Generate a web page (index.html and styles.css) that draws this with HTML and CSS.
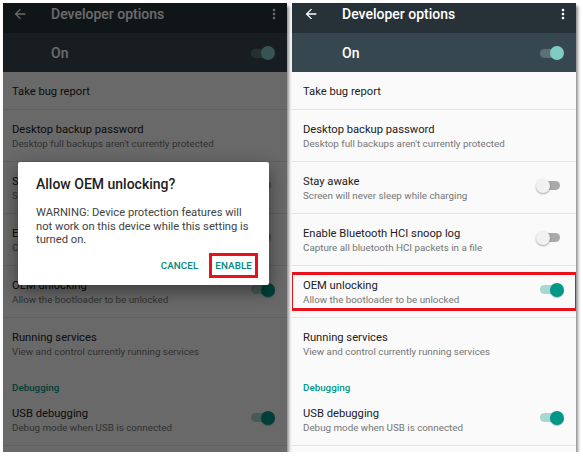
FILE: index.html
```html
<!DOCTYPE html>
<html>
<head>
<meta charset="utf-8">
<link rel="stylesheet" href="styles.css">
</head>
<body>
<div class="stage">
  <div class="phone phone--left">
    <div class="screen">
      <div class="toolbar">
        <svg class="back" viewBox="0 0 24 24"><path d="M20 11H7.83l5.59-5.59L12 4l-8 8 8 8 1.41-1.41L7.83 13H20v-2z"/></svg>
        <span class="toolbar-title">Developer options</span>
        <svg class="more" viewBox="0 0 24 24"><path d="M12 8c1.1 0 2-.9 2-2s-.9-2-2-2-2 .9-2 2 .9 2 2 2zm0 2c-1.1 0-2 .9-2 2s.9 2 2 2 2-.9 2-2-.9-2-2-2zm0 6c-1.1 0-2 .9-2 2s.9 2 2 2 2-.9 2-2-.9-2-2-2z"/></svg>
      </div>
      <div class="switchbar">
        <span class="switchbar-label">On</span>
        <span class="toggle toggle--bar"><span class="thumb"></span></span>
      </div>
      <div class="row row--single"><div class="texts"><div class="title">Take bug report</div></div></div>
      <div class="row"><div class="texts"><div class="title">Desktop backup password</div><div class="sub">Desktop full backups aren't currently protected</div></div></div>
      <div class="row"><div class="texts"><div class="title">Stay awake</div><div class="sub">Screen will never sleep while charging</div></div><span class="toggle toggle--off"><span class="thumb"></span></span></div>
      <div class="row"><div class="texts"><div class="title">Enable Bluetooth HCI snoop log</div><div class="sub">Capture all bluetooth HCI packets in a file</div></div><span class="toggle toggle--off"><span class="thumb"></span></span></div>
      <div class="row"><div class="texts"><div class="title">OEM unlocking</div><div class="sub">Allow the bootloader to be unlocked</div></div><span class="toggle toggle--on"><span class="thumb"></span></span></div>
      <div class="row row--plain"><div class="texts"><div class="title">Running services</div><div class="sub">View and control currently running services</div></div></div>
      <div class="category">Debugging</div>
      <div class="row row--after-cat"><div class="texts"><div class="title">USB debugging</div><div class="sub">Debug mode when USB is connected</div></div><span class="toggle toggle--on"><span class="thumb"></span></span></div>
    </div>
    <div class="scrim"></div>
    <div class="dialog">
      <div class="dialog-title">Allow OEM unlocking?</div>
      <div class="dialog-msg">WARNING: Device protection features will not work on this device while this setting is turned on.</div>
      <div class="dialog-actions">
        <span class="btn">CANCEL</span>
        <span class="btn btn--marked">ENABLE</span>
      </div>
    </div>
  </div>

  <div class="phone phone--right">
    <div class="screen">
      <div class="toolbar">
        <svg class="back" viewBox="0 0 24 24"><path d="M20 11H7.83l5.59-5.59L12 4l-8 8 8 8 1.41-1.41L7.83 13H20v-2z"/></svg>
        <span class="toolbar-title">Developer options</span>
        <svg class="more" viewBox="0 0 24 24"><path d="M12 8c1.1 0 2-.9 2-2s-.9-2-2-2-2 .9-2 2 .9 2 2 2zm0 2c-1.1 0-2 .9-2 2s.9 2 2 2 2-.9 2-2-.9-2-2-2zm0 6c-1.1 0-2 .9-2 2s.9 2 2 2 2-.9 2-2-.9-2-2-2z"/></svg>
      </div>
      <div class="switchbar">
        <span class="switchbar-label">On</span>
        <span class="toggle toggle--bar"><span class="thumb"></span></span>
      </div>
      <div class="row row--single"><div class="texts"><div class="title">Take bug report</div></div></div>
      <div class="row"><div class="texts"><div class="title">Desktop backup password</div><div class="sub">Desktop full backups aren't currently protected</div></div></div>
      <div class="row"><div class="texts"><div class="title">Stay awake</div><div class="sub">Screen will never sleep while charging</div></div><span class="toggle toggle--off"><span class="thumb"></span></span></div>
      <div class="row"><div class="texts"><div class="title">Enable Bluetooth HCI snoop log</div><div class="sub">Capture all bluetooth HCI packets in a file</div></div><span class="toggle toggle--off"><span class="thumb"></span></span></div>
      <div class="row row--marked"><div class="texts"><div class="title">OEM unlocking</div><div class="sub">Allow the bootloader to be unlocked</div></div><span class="toggle toggle--on"><span class="thumb"></span></span></div>
      <div class="row row--plain"><div class="texts"><div class="title">Running services</div><div class="sub">View and control currently running services</div></div></div>
      <div class="category">Debugging</div>
      <div class="row row--after-cat"><div class="texts"><div class="title">USB debugging</div><div class="sub">Debug mode when USB is connected</div></div><span class="toggle toggle--on"><span class="thumb"></span></span></div>
    </div>
  </div>
</div>
</body>
</html>
```

FILE: styles.css
```css
* { box-sizing: border-box; }

body {
  margin: 0;
  background: #ffffff;
  font-family: Roboto, "Liberation Sans", sans-serif;
}

.stage {
  display: flex;
  gap: 5px;
  padding: 3px 0 0 3px;
}

.phone {
  --inset: 11px;
  position: relative;
  width: 284px;
  height: 449px;
  overflow: hidden;
  background: #fafafa;
  box-shadow: 2px 3px 3px rgba(0, 0, 0, 0.45);
}

.phone--left { --inset: 9px; }

.screen {
  display: flex;
  flex-direction: column;
  height: 100%;
}

.toolbar {
  height: 30px;
  flex: none;
  background: #263238;
  display: flex;
  align-items: flex-start;
  padding: 0 5px 0 var(--inset);
}

.back {
  width: 16px;
  height: 22px;
  fill: #ffffff;
  flex: none;
}

.toolbar-title {
  margin-left: 23px;
  line-height: 22px;
  font-size: 14px;
  font-weight: 500;
  color: #ffffff;
  flex: 1;
}

.more {
  width: 16px;
  height: 22px;
  fill: #ffffff;
  flex: none;
}

.switchbar {
  height: 39px;
  flex: none;
  background: #37474f;
  display: flex;
  align-items: center;
  justify-content: space-between;
  padding: 1px 14px 0 calc(var(--inset) + 39px);
}

.switchbar-label {
  font-size: 14px;
  font-weight: 500;
  color: #ffffff;
}

.row {
  height: 52px;
  flex: none;
  display: flex;
  align-items: flex-start;
  justify-content: space-between;
  padding: 13px 14px 0 var(--inset);
  border-bottom: 1px solid #e4e4e4;
  position: relative;
}

.row--single { height: 38px; }
.row--plain { border-bottom: none; }
.row--after-cat { height: 46px; padding-top: 7px; }

.row .toggle { margin-top: 6px; }

.title {
  font-size: 11.2px;
  line-height: 14px;
  color: #212121;
}

.sub {
  font-size: 9.8px;
  line-height: 14px;
  color: #757575;
}

.category {
  height: 30px;
  flex: none;
  padding: 11px 0 0 var(--inset);
  font-size: 9.8px;
  line-height: 14px;
  font-weight: 500;
  color: #009688;
}

.row--marked::after {
  content: "";
  position: absolute;
  left: -2px;
  right: -2px;
  top: 6px;
  bottom: 6px;
  border: 3px solid #e8121c;
}

.toggle {
  flex: none;
  width: 20px;
  height: 9px;
  border-radius: 5px;
  display: flex;
  align-items: center;
  margin-right: 2px;
}

.thumb {
  width: 14px;
  height: 14px;
  border-radius: 50%;
  flex: none;
}

.toggle--on { background: #a8d8d2; justify-content: flex-end; }
.toggle--on .thumb { background: #009688; margin-right: -4px; box-shadow: 0 1px 1px rgba(0,0,0,0.25); }

.toggle--off { background: #a9a9a9; justify-content: flex-start; }
.toggle--off .thumb { background: #f1f1f1; margin-left: -4px; box-shadow: 0 1px 2px rgba(0,0,0,0.35); }

.toggle--bar { background: #5a7273; justify-content: flex-end; }
.toggle--bar .thumb { background: #80cbc4; margin-right: -4px; }

.scrim {
  position: absolute;
  inset: 0;
  background: rgba(0, 0, 0, 0.58);
}

.dialog {
  position: absolute;
  left: 15px;
  top: 159px;
  width: 251px;
  height: 123px;
  background: #ffffff;
  border-radius: 2px;
  box-shadow: 0 6px 18px rgba(0, 0, 0, 0.45);
  padding: 13px 11px 0 18px;
  display: flex;
  flex-direction: column;
}

.dialog-title {
  font-size: 14px;
  line-height: 18px;
  font-weight: 500;
  color: #212121;
}

.dialog-msg {
  margin-top: 13px;
  font-size: 11.2px;
  line-height: 13.5px;
  color: #424242;
  padding-right: 4px;
}

.dialog-actions {
  margin-top: 6px;
  display: flex;
  justify-content: flex-end;
  align-items: center;
  gap: 11px;
}

.btn {
  font-size: 9.8px;
  font-weight: 500;
  color: #00897b;
  line-height: 19px;
  letter-spacing: 0.1px;
}

.btn--marked {
  border: 3px solid #e8121c;
  padding: 0 3px;
}
```
